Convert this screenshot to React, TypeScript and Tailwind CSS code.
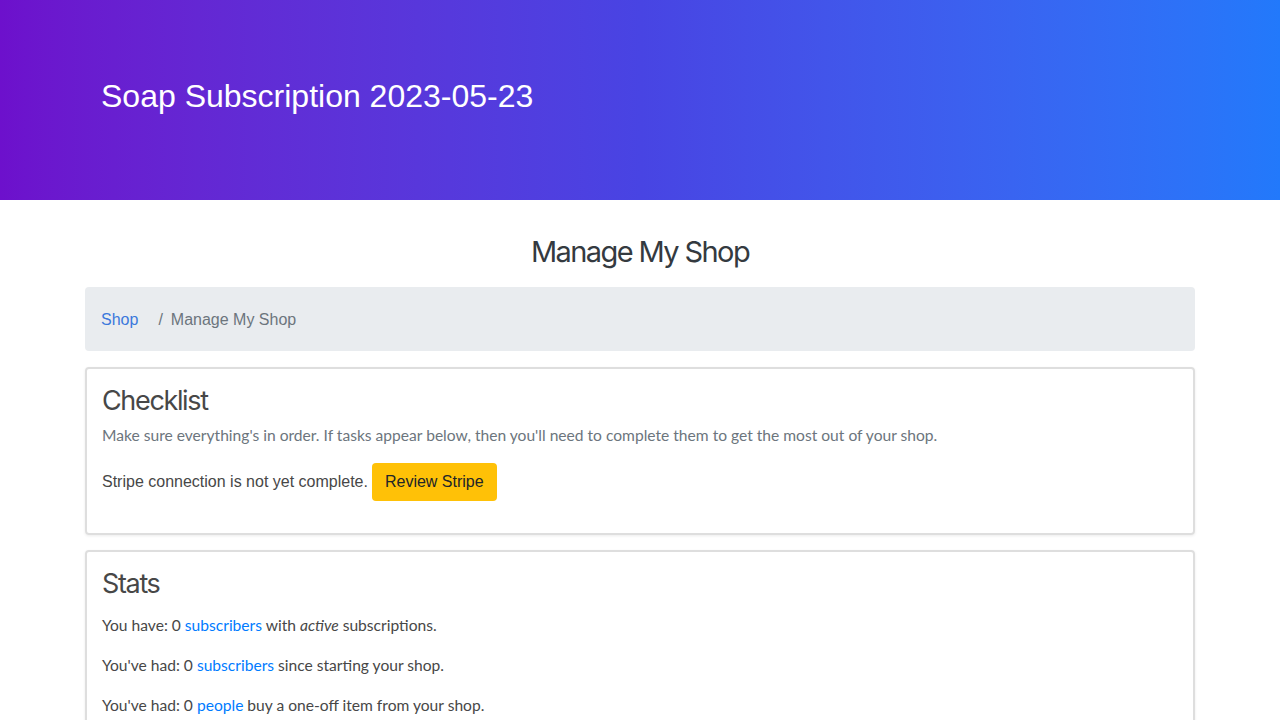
import React from 'react'

const heading = { fontFamily: 'Inter, "Noto Sans", sans-serif' }

export default function App() {
  return (
    <div className="min-h-screen bg-white font-['Lato',sans-serif] text-[15.6px] text-[#474747]">
      {/* Banner */}
      <div className="h-[200px] bg-gradient-to-r from-[#6d10cc] via-[#4844e3] to-[#2279fb]">
        <div className="mx-auto w-[1110px] px-4 pt-[76px]">
          <h1 className="font-['Liberation_Sans',sans-serif] text-[32px] leading-[40px] text-white">
            Soap Subscription 2023-05-23
          </h1>
        </div>
      </div>

      <div className="mx-auto w-[1110px]">
        <h2
          style={heading}
          className="pt-[33px] pb-[16px] text-center text-[29px] font-normal leading-[38px] tracking-[-0.055em] text-[#343a40]"
        >
          Manage My Shop
        </h2>

        {/* Breadcrumb */}
        <nav className="mb-4 flex h-[64px] items-center rounded bg-[#e9ecef] px-4 font-['Liberation_Sans',sans-serif] text-[16px]">
          <a className="mt-[1px] text-[#3b78dc]">Shop</a>
          <span className="mt-[1px] ml-[20px] mr-[8px] text-[#6c757d]">/</span>
          <span className="mt-[1px] text-[#6c757d]">Manage My Shop</span>
        </nav>

        {/* Checklist */}
        <div className="mb-[15px] rounded border-2 border-[#dedede] shadow-[0_1px_3px_rgba(0,0,0,0.08)]">
          <div className="px-[15px] pt-[15px] pb-[16px]">
            <h3 style={heading} className="mb-[5px] text-[27px] leading-[34px] tracking-[-0.05em] text-[#474747]">
              Checklist
            </h3>
            <p className="mb-4 leading-[24px] text-[#6c757d]">
              Make sure everything's in order. If tasks appear below, then you'll need to complete them to get the most out of your shop.
            </p>
            <div className="mb-4 flex items-center font-['Liberation_Sans',sans-serif] text-[16px]">
              <span className="mr-[4px] mt-[-1px] text-[#474747]">Stripe connection is not yet complete.</span>
              <button className="h-[38px] rounded bg-[#ffc107] px-[13px] text-[16px] text-[#212529]">
                Review Stripe
              </button>
            </div>
          </div>
        </div>

        {/* Stats */}
        <div className="rounded border-2 border-[#dedede] shadow-[0_1px_3px_rgba(0,0,0,0.08)]">
          <div className="px-[15px] pt-[15px] pb-[15px]">
            <h3 style={heading} className="mb-[12px] text-[27px] leading-[34px] tracking-[-0.05em] text-[#474747]">
              Stats
            </h3>
            <p className="mb-4 leading-[24px]">
              You have: 0 <a className="text-[#007bff]">subscribers</a> with <em>active</em> subscriptions.
            </p>
            <p className="mb-4 leading-[24px]">
              You've had: 0 <a className="text-[#007bff]">subscribers</a> since starting your shop.
            </p>
            <p className="mb-4 leading-[24px]">
              You've had: 0 <a className="text-[#007bff]">people</a> buy a one-off item from your shop.
            </p>
          </div>
        </div>
      </div>
    </div>
  )
}
